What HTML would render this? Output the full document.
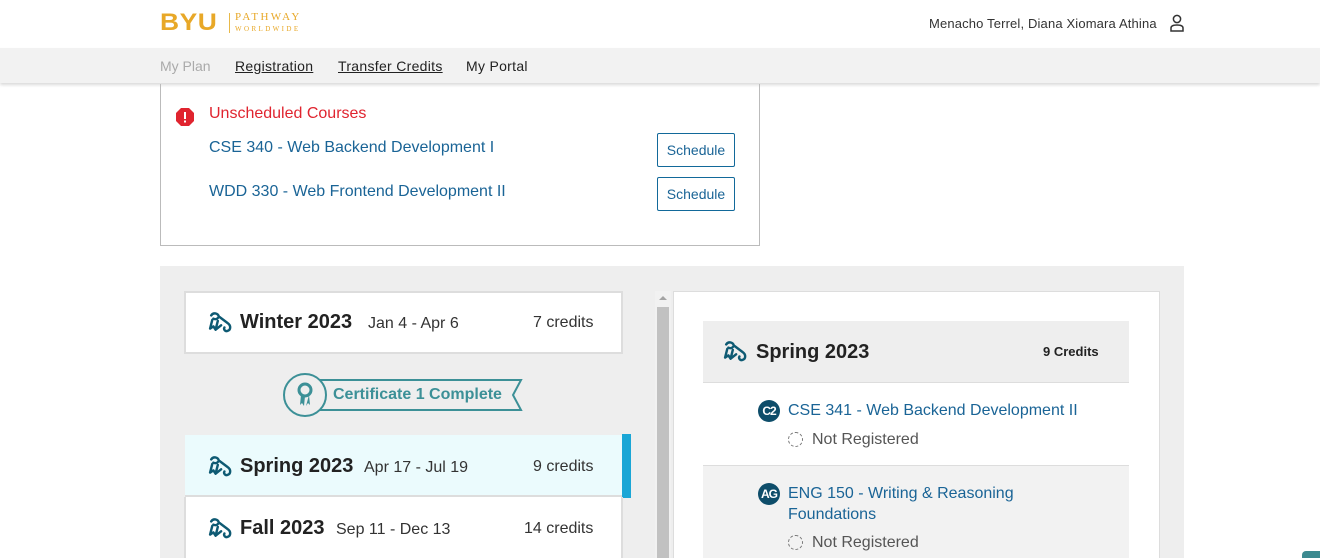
<!DOCTYPE html>
<html><head><meta charset="utf-8"><style>
*{box-sizing:border-box;margin:0;padding:0}
html,body{width:1320px;height:558px;overflow:hidden}
body{background:#fff;font-family:"Liberation Sans",sans-serif;color:#333;position:relative}
.abs{position:absolute}
.ic{position:absolute}
</style></head><body>
<!-- header -->
<div class="abs" style="left:160px;top:9px;font-weight:900;font-size:24px;color:#e8a828;letter-spacing:0.5px;transform:scaleX(1.1);transform-origin:left">BYU</div>
<div class="abs" style="left:229px;top:13px;width:1px;height:20px;background:#e8b94a"></div>
<div class="abs" style="left:235px;top:12px;font-family:'Liberation Serif',serif;color:#e8a828;font-size:11px;letter-spacing:2.3px;line-height:11px">PATHWAY<br><span style="font-size:7px;letter-spacing:2.4px">WORLDWIDE</span></div>
<div class="abs" style="left:929px;top:16px;font-size:13px;color:#333;letter-spacing:0.15px">Menacho Terrel, Diana Xiomara Athina</div>
<svg class="ic" style="left:1169px;top:13px" width="16" height="20" viewBox="0 0 16 20"><circle cx="8" cy="6" r="3.6" fill="none" stroke="#333" stroke-width="1.5"/><path d="M2 18v-3c0-2 2-3 6-3s6 1 6 3v3z" fill="none" stroke="#333" stroke-width="1.5"/></svg>
<!-- nav -->
<div class="abs" style="left:0;top:48px;width:1320px;height:35px;background:#f2f2f2;box-shadow:0 2px 3px rgba(0,0,0,.15)"></div>
<div class="abs" style="left:160px;top:58px;font-size:14px;color:#aaa">My Plan</div>
<div class="abs" style="left:235px;top:58px;font-size:14px;color:#222;text-decoration:underline;letter-spacing:0.3px">Registration</div>
<div class="abs" style="left:338px;top:58px;font-size:14px;color:#222;text-decoration:underline;letter-spacing:0.3px">Transfer Credits</div>
<div class="abs" style="left:466px;top:58px;font-size:14px;color:#222;letter-spacing:0.3px">My Portal</div>
<!-- unscheduled box -->
<div class="abs" style="left:160px;top:84px;width:600px;height:162px;border:1px solid #bbb;border-top:none"></div>
<svg class="ic" style="left:175px;top:107px" width="20" height="20" viewBox="0 0 20 20"><polygon points="6,1 14,1 19,6 19,14 14,19 6,19 1,14 1,6" fill="#e0242f"/><rect x="9" y="5" width="2" height="7" fill="#fff"/><rect x="9" y="13.5" width="2" height="2" fill="#fff"/></svg>
<div class="abs" style="left:209px;top:105px;font-size:16px;color:#e0242f">Unscheduled Courses</div>
<div class="abs" style="left:209px;top:139px;font-size:16px;color:#1a6496">CSE 340 - Web Backend Development I</div>
<div class="abs" style="left:209px;top:183px;font-size:16px;color:#1a6496">WDD 330 - Web Frontend Development II</div>
<div class="abs" style="left:657px;top:133px;width:78px;height:34px;border:1px solid #12699a;border-radius:2px;font-size:14px;color:#1a6496;text-align:center;line-height:32px">Schedule</div>
<div class="abs" style="left:657px;top:177px;width:78px;height:34px;border:1px solid #12699a;border-radius:2px;font-size:14px;color:#1a6496;text-align:center;line-height:32px">Schedule</div>
<!-- gray panel -->
<div class="abs" style="left:160px;top:266px;width:1024px;height:300px;background:#eee"></div>
<!-- left cards -->
<div class="abs" style="left:184px;top:291px;width:439px;height:63px;background:#fff;border:2px solid #ddd"></div>
<div class="abs" style="left:185px;top:435px;width:437px;height:62px;background:#ebfbfd;border-bottom:2px solid #ddd"></div>
<div class="abs" style="left:622px;top:434px;width:9px;height:64px;background:#1aa6d6"></div>
<div class="abs" style="left:184px;top:497px;width:439px;height:70px;background:#fff;border:2px solid #ddd;border-top:none"></div>

<svg width="0" height="0" style="position:absolute"><defs><g id="dip"><path d="M3 4c2-3 6-2 7 1l8 6c3 2 3 6 0 7-2 1-4-1-3-3M10 5c-1 2-3 3-5 2M4 8l-2 8 3-2 2 3 2-8M12 13l-5 4" fill="none" stroke="#0e5a73" stroke-width="2.2" stroke-linecap="round" stroke-linejoin="round"/></g></defs></svg>
<svg class="ic" style="left:207px;top:311px" width="26" height="22" viewBox="0 0 22 20"><use href="#dip"/></svg>
<div class="abs" style="left:240px;top:311px;font-size:20px;font-weight:bold;color:#222">Winter 2023</div>
<div class="abs" style="left:368px;top:315px;font-size:16px;color:#333">Jan 4 - Apr 6</div>
<div class="abs" style="left:533px;top:314px;font-size:16px;color:#333">7 credits</div>

<svg class="ic" style="left:207px;top:455px" width="26" height="22" viewBox="0 0 22 20"><use href="#dip"/></svg>
<div class="abs" style="left:240px;top:455px;font-size:20px;font-weight:bold;color:#222">Spring 2023</div>
<div class="abs" style="left:364px;top:459px;font-size:16px;color:#333">Apr 17 - Jul 19</div>
<div class="abs" style="left:533px;top:458px;font-size:16px;color:#333">9 credits</div>

<svg class="ic" style="left:207px;top:517px" width="26" height="22" viewBox="0 0 22 20"><use href="#dip"/></svg>
<div class="abs" style="left:240px;top:517px;font-size:20px;font-weight:bold;color:#222">Fall 2023</div>
<div class="abs" style="left:336px;top:521px;font-size:16px;color:#333">Sep 11 - Dec 13</div>
<div class="abs" style="left:524px;top:520px;font-size:16px;color:#333">14 credits</div>

<!-- certificate badge -->
<svg class="ic" style="left:282px;top:372px" width="242" height="46" viewBox="0 0 242 46"><path d="M30 8H239l-8 15 8 15H30" fill="none" stroke="#3c9097" stroke-width="2"/><circle cx="23" cy="23" r="21" fill="#eee" stroke="#3c9097" stroke-width="2"/><circle cx="23" cy="18" r="6" fill="none" stroke="#3c9097" stroke-width="3"/><path d="M19 23l-1 10 2-2 2 3 1-10M27 23l1 10-2-2-2 3" fill="#3c9097"/></svg>
<div class="abs" style="left:333px;top:386px;font-size:16px;font-weight:bold;color:#3c9097">Certificate 1 Complete</div>

<!-- scrollbar -->
<div class="abs" style="left:655px;top:291px;width:16px;height:270px;background:#f1f1f1"></div>
<div class="abs" style="left:659px;top:296px;width:0;height:0;border-left:4px solid transparent;border-right:4px solid transparent;border-bottom:4px solid #a3a3a3"></div>
<div class="abs" style="left:657px;top:307px;width:12px;height:260px;background:#c1c1c1"></div>

<!-- right panel -->
<div class="abs" style="left:673px;top:291px;width:487px;height:280px;background:#fff;border:1px solid #ddd"></div>
<div class="abs" style="left:703px;top:321px;width:426px;height:62px;background:#eee;border-bottom:1px solid #ddd"></div>
<svg class="ic" style="left:722px;top:340px" width="26" height="22" viewBox="0 0 22 20"><use href="#dip"/></svg>
<div class="abs" style="left:756px;top:341px;font-size:20px;font-weight:bold;color:#222">Spring 2023</div>
<div class="abs" style="left:1043px;top:344px;font-size:13px;font-weight:bold;color:#222">9 Credits</div>
<div class="abs" style="left:703px;top:465px;width:426px;height:100px;background:#f2f2f2;border-top:1px solid #ddd"></div>
<div class="abs" style="left:758px;top:400px;width:22px;height:22px;border-radius:50%;background:#0e4d6a;color:#fff;font-size:12px;font-weight:bold;text-align:center;line-height:22px;letter-spacing:-1px">C2</div>
<div class="abs" style="left:788px;top:402px;font-size:16px;color:#1a6496">CSE 341 - Web Backend Development II</div>
<div class="abs" style="left:788px;top:432px;width:15px;height:15px;border-radius:50%;border:1px dashed #777"></div>
<div class="abs" style="left:812px;top:431px;font-size:16px;color:#555">Not Registered</div>
<div class="abs" style="left:758px;top:483px;width:22px;height:22px;border-radius:50%;background:#0e4d6a;color:#fff;font-size:12px;font-weight:bold;text-align:center;line-height:22px;letter-spacing:-1px">AG</div>
<div class="abs" style="left:788px;top:483px;font-size:16px;color:#1a6496;line-height:21px;width:300px">ENG 150 - Writing &amp; Reasoning Foundations</div>
<div class="abs" style="left:788px;top:535px;width:15px;height:15px;border-radius:50%;border:1px dashed #777"></div>
<div class="abs" style="left:812px;top:534px;font-size:16px;color:#555">Not Registered</div>
<div class="abs" style="left:1302px;top:551px;width:20px;height:10px;border-radius:4px 0 0 0;background:#3c8a90"></div>
</body></html>
